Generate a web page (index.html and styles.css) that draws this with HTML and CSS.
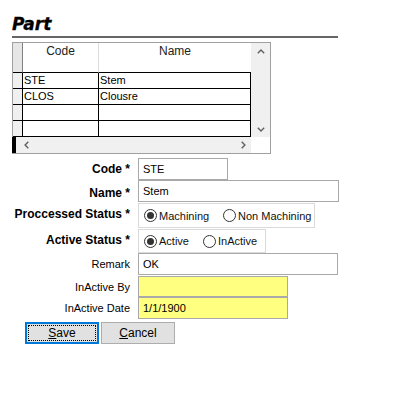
FILE: index.html
```html
<!DOCTYPE html>
<html>
<head>
<meta charset="utf-8">
<link rel="stylesheet" href="styles.css">
</head>
<body>
<div class="page">
  <div class="title">Part</div>
  <div class="grid">
    <div class="hsel"></div>
    <div class="hc code">Code</div>
    <div class="hc name">Name</div>
    <div class="vscroll">
      <svg width="8" height="5" viewBox="0 0 8 5"><polyline points="0.8,4.3 4,1.1 7.2,4.3" fill="none" stroke="#606060" stroke-width="1.4"/></svg>
      <svg width="8" height="5" viewBox="0 0 8 5"><polyline points="0.8,0.7 4,3.9 7.2,0.7" fill="none" stroke="#606060" stroke-width="1.4"/></svg>
    </div>

    <div class="sel"></div><div class="c code">STE</div><div class="c name">Stem</div>
    <div class="sel"></div><div class="c code">CLOS</div><div class="c name">Clousre</div>
    <div class="sel"></div><div class="c code"></div><div class="c name"></div>
    <div class="sel"></div><div class="c code"></div><div class="c name"></div>

    <div class="cur"></div>
    <div class="hscroll">
      <svg width="5" height="8" viewBox="0 0 5 8"><polyline points="4.3,0.8 1.1,4 4.3,7.2" fill="none" stroke="#606060" stroke-width="1.4"/></svg>
      <svg width="5" height="8" viewBox="0 0 5 8"><polyline points="0.7,0.8 3.9,4 0.7,7.2" fill="none" stroke="#606060" stroke-width="1.4"/></svg>
    </div>
    <div class="corner"></div>
  </div>

  <div class="form">
    <div class="lbl b">Code *</div>
    <div class="in w90">STE</div>

    <div class="lbl b">Name *</div>
    <div class="in w201">Stem</div>

    <div class="lbl b">Proccessed Status *</div>
    <div class="rg proc">
      <div class="opt w79"><span class="radio on"></span><span>Machining</span></div>
      <div class="opt"><span class="radio"></span><span>Non Machining</span></div>
    </div>

    <div class="lbl b">Active Status *</div>
    <div class="rg act">
      <div class="opt w59"><span class="radio on"></span><span>Active</span></div>
      <div class="opt"><span class="radio"></span><span>InActive</span></div>
    </div>

    <div class="lbl">Remark</div>
    <div class="in w200">OK</div>

    <div class="lbl">InActive By</div>
    <div class="in w150 yellow short"></div>

    <div class="lbl">InActive Date</div>
    <div class="in w150 yellow">1/1/1900</div>
  </div>

  <div class="btns">
    <div class="btn def"><span class="fr"><u>S</u>ave</span></div>
    <div class="btn"><span><u>C</u>ancel</span></div>
  </div>
</div>
</body>
</html>
```

FILE: styles.css
```css
body {
  margin: 0;
  background: #fff;
  color: #000;
  font-family: "Liberation Sans", Arial, sans-serif;
  font-size: 11px;
}

.page {
  padding-left: 12px;
}

.title {
  font-family: "DejaVu Sans", sans-serif;
  font-weight: bold;
  font-style: italic;
  font-size: 17px;
  line-height: 20px;
  padding-top: 14px;
  padding-bottom: 2px;
  border-bottom: 2px solid #666;
  width: 326px;
  -webkit-text-stroke: 0.3px #000;
}

.grid {
  margin-top: 4px;
  display: grid;
  grid-template-columns: 9px 76px 153px 19px;
  grid-template-rows: 30px 16px 16px 16px 16px 16px;
  border: 1px solid #a0a0a0;
  width: max-content;
}

.grid > div {
  box-sizing: border-box;
}

.hsel {
  background: #e6e6e6;
  border-bottom: 1px solid #000;
}

.hc {
  border-bottom: 1px solid #000;
  text-align: center;
  font-size: 12px;
  line-height: 14px;
  padding-top: 1px;
  color: #222;
  background: #fff;
}

.hc.code {
  border-left: 1px solid #808080;
}

.hc.name {
  border-left: 1px solid #dcdcdc;
}

.vscroll {
  grid-column: 4;
  grid-row: 1 / 6;
  background: #f0f0f0;
  display: flex;
  flex-direction: column;
  justify-content: space-between;
  align-items: center;
  padding: 6px 0 5px;
}

.vscroll svg, .hscroll svg {
  display: block;
}

.sel {
  background: #f0f0f0;
  border-bottom: 1px solid #000;
}

.c {
  border-bottom: 1px solid #000;
  border-left: 1px solid #000;
  padding-left: 1px;
  line-height: 15px;
  white-space: nowrap;
  overflow: hidden;
}

.c.name {
  border-right: 1px solid #000;
}

.cur {
  margin-left: -1px;
  background: linear-gradient(#000, #000) left top / 4px 100% no-repeat, #f0f0f0;
}

.hscroll {
  grid-column: 2 / 4;
  background: #f0f0f0;
  display: flex;
  justify-content: space-between;
  align-items: center;
  padding: 0 5px 0 2px;
}

.corner {
  background: #fff;
}

.form {
  margin-top: 4px;
  display: grid;
  grid-template-columns: 118px max-content;
  column-gap: 8px;
  grid-template-rows: 22px 23px 26px 24px 23px 21px 22px;
}

.lbl {
  display: flex;
  align-items: center;
  justify-content: flex-end;
  white-space: nowrap;
  height: 22px;
}

.lbl.b {
  font-weight: bold;
  font-size: 12px;
}

.in {
  align-self: start;
  box-sizing: border-box;
  height: 22px;
  border: 1px solid #a9a9a9;
  padding-left: 4px;
  display: flex;
  align-items: center;
  background: #fff;
}

.in.short {
  height: 21px;
}

.w90 { width: 90px; }
.w201 { width: 201px; }
.w200 { width: 200px; }
.w150 { width: 150px; }

.yellow {
  background: #ffff80;
}

.rg {
  align-self: start;
  box-sizing: border-box;
  height: 25px;
  border: 1px solid #dadada;
  display: flex;
  align-items: center;
  padding-left: 5px;
  color: #111;
}

.rg.proc {
  width: 177px;
}

.rg.act {
  width: 128px;
  height: 24px;
}

.form .lbl:nth-of-type(3) { height: 25px; }
.form .lbl:nth-of-type(4) { height: 24px; }
.form .lbl:nth-of-type(6) { height: 21px; }

.opt {
  display: flex;
  align-items: center;
  gap: 2px;
  white-space: nowrap;
}

.opt.w79 { width: 79px; }
.opt.w59 { width: 59px; }

.radio {
  width: 13px;
  height: 13px;
  box-sizing: border-box;
  border: 1px solid #333;
  border-radius: 50%;
  background: #fff;
  display: flex;
  align-items: center;
  justify-content: center;
}

.radio.on::after {
  content: "";
  width: 7px;
  height: 7px;
  border-radius: 50%;
  background: #333;
}

.btns {
  display: flex;
  gap: 2px;
  margin-top: 3px;
  margin-left: 13px;
}

.btn {
  width: 74px;
  height: 22px;
  box-sizing: border-box;
  background: #e1e1e1;
  border: 1px solid #adadad;
  display: flex;
  align-items: center;
  justify-content: center;
  font-size: 12px;
}

.btn.def {
  border: 2px solid #0078d7;
  padding: 1px;
  align-items: stretch;
}

.fr {
  flex: 1;
  border: 1px dotted #000;
  display: flex;
  align-items: center;
  justify-content: center;
}
```
